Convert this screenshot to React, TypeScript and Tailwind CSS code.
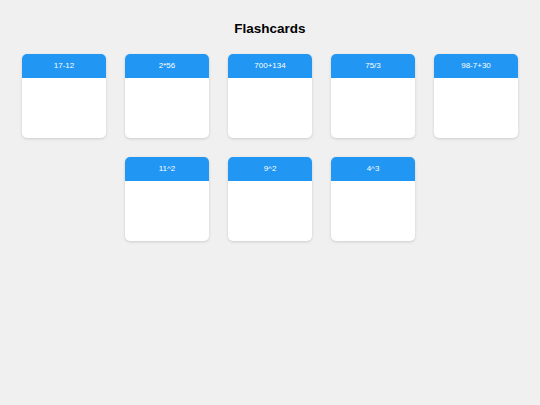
const cards = ['17-12', '2*56', '700+134', '75/3', '98-7+30', '11^2', '9^2', '4^3']

export default function App() {
  return (
    <div className="min-h-screen bg-[#f0f0f0] pt-[20px]" style={{ fontFamily: '"Liberation Sans", Arial, sans-serif' }}>
      <h1 className="text-center text-[13.5px] font-bold leading-[18px] text-black">Flashcards</h1>
      <div className="mx-auto mt-[16px] flex w-[520px] flex-wrap justify-center gap-[19px]">
        {cards.map((card) => (
          <div key={card} className="h-[84px] w-[84px] overflow-hidden rounded-[5px] bg-white shadow-[0_1px_3px_rgba(0,0,0,0.15)]">
            <div className="flex h-[24px] items-center justify-center bg-[#2196f3] text-[8px] text-white">{card}</div>
          </div>
        ))}
      </div>
    </div>
  )
}
